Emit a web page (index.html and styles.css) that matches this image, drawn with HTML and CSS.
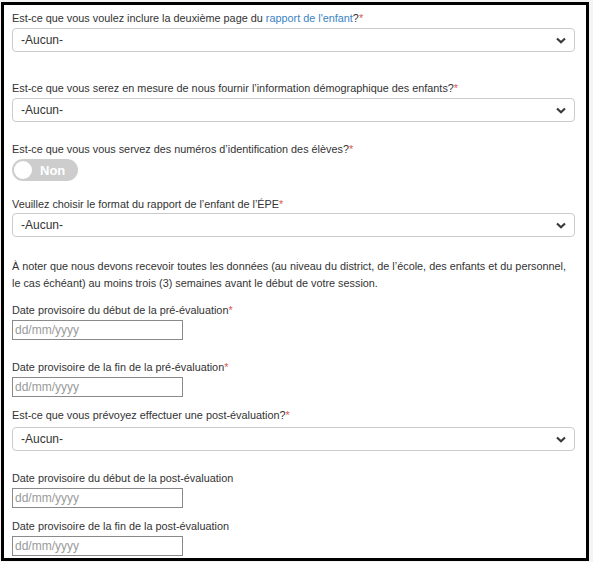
FILE: index.html
```html
<!DOCTYPE html>
<html lang="fr">

<head>
    <meta charset="UTF-8">
    <meta name="viewport" content="width=device-width, initial-scale=1.0">
    <title>Formulaire ÉPE</title>
    <link rel="stylesheet" href="styles.css">
</head>

<body>
    <div class="frame">
        <form class="form">
            <div class="field field-wide">
                <label>Est-ce que vous voulez inclure la deuxième page du <a href="#">rapport de l'enfant</a>?<span class="req">*</span></label>
                <div class="select-wrap">
                    <select class="select">
                        <option>-Aucun-</option>
                    </select>
                    <svg class="chevron" width="10" height="7" viewBox="0 0 10 7"><path d="M1 1.5 L5 5.2 L9 1.5" fill="none" stroke="#3a3a3a" stroke-width="2.2"/></svg>
                </div>
            </div>

            <div class="field">
                <label>Est-ce que vous serez en mesure de nous fournir l’information démographique des enfants?<span class="req">*</span></label>
                <div class="select-wrap">
                    <select class="select">
                        <option>-Aucun-</option>
                    </select>
                    <svg class="chevron" width="10" height="7" viewBox="0 0 10 7"><path d="M1 1.5 L5 5.2 L9 1.5" fill="none" stroke="#3a3a3a" stroke-width="2.2"/></svg>
                </div>
            </div>

            <div class="field field-mid">
                <label>Est-ce que vous vous servez des numéros d’identification des élèves?<span class="req">*</span></label>
                <div class="toggle">
                    <span class="knob"></span>
                    <span class="toggle-text">Non</span>
                </div>
            </div>

            <div class="field">
                <label class="tight">Veuillez choisir le format du rapport de l’enfant de l’ÉPE<span class="req">*</span></label>
                <div class="select-wrap">
                    <select class="select">
                        <option>-Aucun-</option>
                    </select>
                    <svg class="chevron" width="10" height="7" viewBox="0 0 10 7"><path d="M1 1.5 L5 5.2 L9 1.5" fill="none" stroke="#3a3a3a" stroke-width="2.2"/></svg>
                </div>
            </div>

            <p class="note">À noter que nous devons recevoir toutes les données (au niveau du district, de l’école, des enfants et du personnel, le cas échéant) au moins trois (3) semaines avant le début de votre session.</p>

            <div class="field">
                <label>Date provisoire du début de la pré-évaluation<span class="req">*</span></label>
                <input class="date" type="text" placeholder="dd/mm/yyyy">
            </div>

            <div class="field field-small">
                <label>Date provisoire de la fin de la pré-évaluation<span class="req">*</span></label>
                <input class="date" type="text" placeholder="dd/mm/yyyy">
            </div>

            <div class="field">
                <label class="loose">Est-ce que vous prévoyez effectuer une post-évaluation?<span class="req">*</span></label>
                <div class="select-wrap">
                    <select class="select">
                        <option>-Aucun-</option>
                    </select>
                    <svg class="chevron" width="10" height="7" viewBox="0 0 10 7"><path d="M1 1.5 L5 5.2 L9 1.5" fill="none" stroke="#3a3a3a" stroke-width="2.2"/></svg>
                </div>
            </div>

            <div class="field field-small">
                <label>Date provisoire du début de la post-évaluation</label>
                <input class="date" type="text" placeholder="dd/mm/yyyy">
            </div>

            <div class="field">
                <label>Date provisoire de la fin de la post-évaluation</label>
                <input class="date" type="text" placeholder="dd/mm/yyyy">
            </div>
        </form>
    </div>
</body>

</html>
```

FILE: styles.css
```css
* {
    margin: 0;
    padding: 0;
    box-sizing: border-box;
}

body {
    background-color: #f4f4f4;
    padding: 2px 4px 1px 1px;
    font-family: "Liberation Sans", Arial, sans-serif;
    font-size: 10.85px;
    color: #333;
}

.frame {
    height: 559px;
    border: 3px solid #000;
    background-color: #fff;
    overflow: hidden;
}

.form {
    padding: 5px 11px 0 8px;
}

.field {
    margin-bottom: 19px;
}

.field-wide {
    margin-bottom: 28px;
}

.field-mid {
    margin-bottom: 15px;
}

.field-small {
    margin-bottom: 10px;
}

.field label {
    display: block;
    line-height: 17px;
    margin-bottom: 1px;
}

.field label.tight {
    margin-bottom: 0;
}

.field label.loose {
    margin-bottom: 3px;
}

.field label a {
    color: #3a83c4;
    text-decoration: none;
}

.req {
    color: #e0564f;
}

.select-wrap {
    position: relative;
}

.select {
    -webkit-appearance: none;
    appearance: none;
    display: block;
    width: 100%;
    height: 24px;
    padding: 0 8px;
    border: 1px solid #ccc;
    border-radius: 4px;
    background-color: #fff;
    font-family: inherit;
    font-size: 12px;
    color: #333;
}

.chevron {
    position: absolute;
    right: 9px;
    top: 9px;
    pointer-events: none;
}

.toggle {
    display: flex;
    align-items: center;
    width: 66px;
    height: 22px;
    padding: 0 2px;
    border-radius: 11px;
    background-color: #cdcdcd;
}

.knob {
    width: 18px;
    height: 18px;
    border-radius: 50%;
    background-color: #fff;
}

.toggle-text {
    margin-left: 8px;
    font-size: 13px;
    font-weight: bold;
    color: #fff;
}

/* collapses with the field margin above */
.note {
    line-height: 17px;
    margin-top: 21px;
    margin-bottom: 10px;
}

.date {
    display: block;
    width: 171px;
    height: 20px;
    padding: 0 2px;
    border: 1px solid #8a8a8a;
    border-radius: 0;
    font-family: inherit;
    font-size: 12px;
    color: #333;
}

.date::placeholder {
    color: #9a9a9a;
}
```
